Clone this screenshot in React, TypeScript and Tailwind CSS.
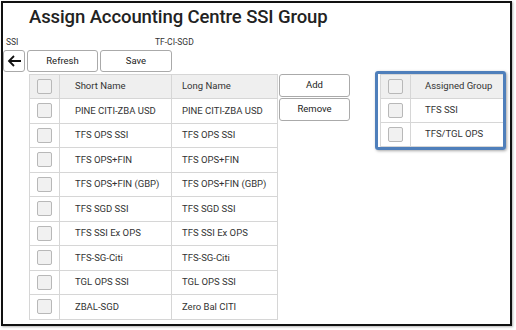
import React from "react";

const rows: [string, string][] = [
  ["PINE CITI-ZBA USD", "PINE CITI-ZBA USD"],
  ["TFS OPS SSI", "TFS OPS SSI"],
  ["TFS OPS+FIN", "TFS OPS+FIN"],
  ["TFS OPS+FIN (GBP)", "TFS OPS+FIN (GBP)"],
  ["TFS SGD SSI", "TFS SGD SSI"],
  ["TFS SSI Ex OPS", "TFS SSI Ex OPS"],
  ["TFS-SG-Citi", "TFS-SG-Citi"],
  ["TGL OPS SSI", "TGL OPS SSI"],
  ["ZBAL-SGD", "Zero Bal CITI"],
];

const Box = () => (
  <div className="w-[15px] h-[15px] border border-[#b8b8b8] bg-[#f1f1f1] rounded-[2px]" />
);

export default function App() {
  return (
    <div
      className="w-[516px] h-[330px] bg-white pl-[1px] pt-[1px]"
      style={{ fontFamily: "Roboto, 'Liberation Sans', sans-serif" }}
    >
      <div className="w-[511px] h-[325px] border-2 border-[#111] shadow-[1px_1px_2px_rgba(0,0,0,0.3)] flex flex-col">
        <div className="pl-[26px] mt-[3px] text-[18.5px] leading-[22px] font-medium text-[#222] tracking-[-0.1px]">
          Assign Accounting Centre SSI Group
        </div>
        <div className="flex text-[8.5px] text-[#333] mt-[9px] h-[11px] leading-[11px]">
          <span className="pl-[3px] w-[152px]">SSI</span>
          <span>TF-CI-SGD</span>
        </div>
        <div className="flex mt-[2px] h-[22px] gap-[2px] text-[9.5px] text-[#222]">
          <button className="w-[22px] h-[22px] border border-[#aaa] rounded-[3px] bg-white flex items-center justify-center">
            <svg width="15" height="12" viewBox="0 0 15 12">
              <path d="M14 6H2M7 1L2 6l5 5" stroke="#111" strokeWidth="1.8" fill="none" />
            </svg>
          </button>
          <button className="w-[71px] h-[22px] border border-[#aaa] rounded-[3px] bg-white">Refresh</button>
          <button className="w-[72px] h-[22px] border border-[#aaa] rounded-[3px] bg-white">Save</button>
        </div>
        <div className="flex mt-[2px] text-[9.5px] text-[#333]">
          <div className="ml-[26px] w-[249px] border-l border-t border-[#d6d6d6]">
            <div className="flex h-[24px] bg-[#efefef] border-b border-[#d6d6d6]">
              <div className="w-[30px] border-r border-[#d6d6d6] flex items-center justify-center"><Box /></div>
              <div className="w-[112px] border-r border-[#d6d6d6] flex items-center pl-[15px]">Short Name</div>
              <div className="w-[106px] border-r border-[#d6d6d6] flex items-center pl-[10px]">Long Name</div>
            </div>
            {rows.map(([s, l]) => (
              <div key={s} className="flex h-[24.5px] border-b border-[#d6d6d6]">
                <div className="w-[30px] border-r border-[#d6d6d6] flex items-center justify-center"><Box /></div>
                <div className="w-[112px] border-r border-[#d6d6d6] flex items-center pl-[15px]">{s}</div>
                <div className="w-[106px] border-r border-[#d6d6d6] flex items-center pl-[10px]">{l}</div>
              </div>
            ))}
          </div>
          <div className="flex flex-col ml-[1px] gap-[1px]">
            <button className="w-[71px] h-[23px] border border-[#aaa] rounded-[3px] bg-white text-[#222]">Add</button>
            <button className="w-[71px] h-[23px] border border-[#aaa] rounded-[3px] bg-white text-[#222]">Remove</button>
          </div>
          <div className="ml-[25px] -mt-[3px] self-start w-[131px] border-[3px] border-[#4f7fbb] rounded-[3px] shadow-[1px_1px_3px_rgba(0,0,0,0.35)] pl-[2px]">
            <div className="border-l border-t border-[#d6d6d6]">
              {["", "TFS SSI", "TFS/TGL OPS"].map((t, i) => (
                <div key={i} className={`flex h-[24px] border-b border-[#d6d6d6] ${i === 0 ? "bg-[#efefef]" : ""}`}>
                  <div className="w-[30px] border-r border-[#d6d6d6] flex items-center justify-center"><Box /></div>
                  <div className="flex-1 flex items-center pl-[14px]">{i === 0 ? "Assigned Group" : t}</div>
                </div>
              ))}
            </div>
          </div>
        </div>
      </div>
    </div>
  );
}
